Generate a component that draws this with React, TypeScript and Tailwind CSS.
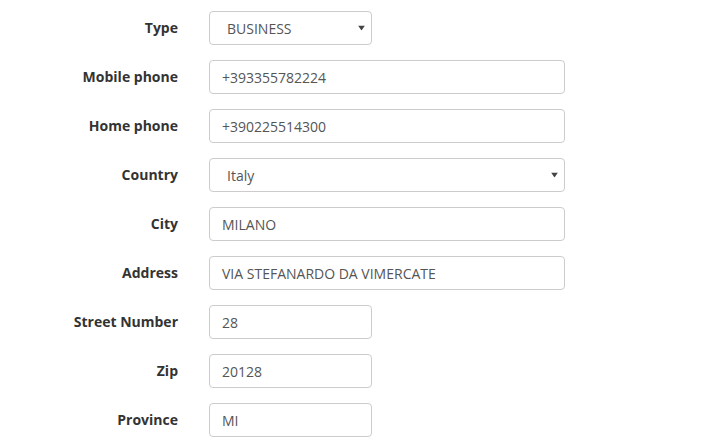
import React from "react";

type Field = {
  label: string;
  value: string;
  kind: "input" | "select";
  wide: boolean;
};

const fields: Field[] = [
  { label: "Type", value: "BUSINESS", kind: "select", wide: false },
  { label: "Mobile phone", value: "+393355782224", kind: "input", wide: true },
  { label: "Home phone", value: "+390225514300", kind: "input", wide: true },
  { label: "Country", value: "Italy", kind: "select", wide: true },
  { label: "City", value: "MILANO", kind: "input", wide: true },
  { label: "Address", value: "VIA STEFANARDO DA VIMERCATE", kind: "input", wide: true },
  { label: "Street Number", value: "28", kind: "input", wide: false },
  { label: "Zip", value: "20128", kind: "input", wide: false },
  { label: "Province", value: "MI", kind: "input", wide: false },
];

function Caret() {
  return (
    <svg
      width="7"
      height="5"
      viewBox="0 0 7 5"
      className="pointer-events-none absolute right-[6px] top-1/2 -translate-y-1/2"
    >
      <path d="M0 0h7L3.5 5z" fill="#444" />
    </svg>
  );
}

export default function App() {
  return (
    <div
      className="min-h-screen bg-white pt-[11px] text-[14px]"
      style={{ fontFamily: '"Open Sans", "Liberation Sans", sans-serif' }}
    >
      <div className="grid grid-cols-[178px_auto] gap-x-[31px] gap-y-[15px]">
        {fields.map((f) => (
          <React.Fragment key={f.label}>
            <label className="flex h-[34px] items-center justify-end pb-[1px] font-bold text-[#333]">
              {f.label}
            </label>
            <div
              className={`relative flex h-[34px] items-center rounded-[4px] border border-[#ccc] bg-white text-[#555] ${
                f.wide ? "w-[356px]" : "w-[163px]"
              } ${f.kind === "select" ? "pl-[17px]" : "pl-[12px]"}`}
            >
              {f.value}
              {f.kind === "select" && <Caret />}
            </div>
          </React.Fragment>
        ))}
      </div>
    </div>
  );
}
